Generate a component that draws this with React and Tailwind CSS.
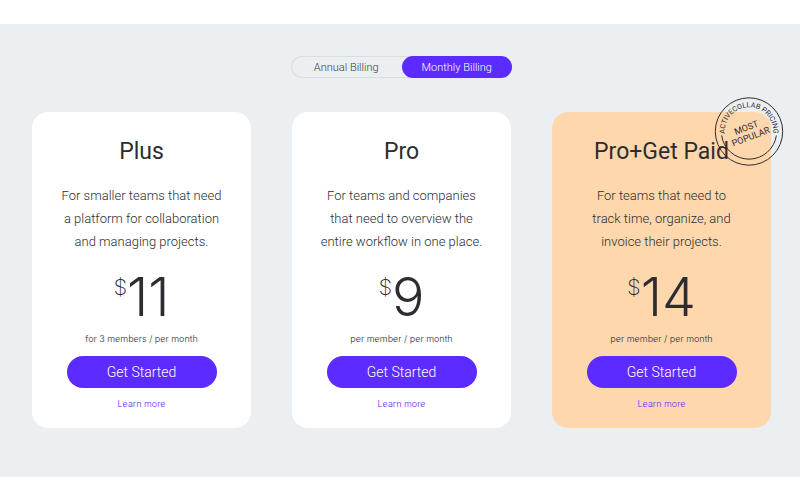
import { useState } from "react";

const plans = [
  {
    name: "Plus",
    lines: ["For smaller teams that need", "a platform for collaboration", "and managing projects."],
    price: "11",
    unit: "for 3 members / per month",
  },
  {
    name: "Pro",
    lines: ["For teams and companies", "that need to overview the", "entire workflow in one place."],
    price: "9",
    unit: "per member / per month",
  },
  {
    name: "Pro+Get Paid",
    lines: ["For teams that need to", "track time, organize, and", "invoice their projects."],
    price: "14",
    unit: "per member / per month",
    popular: true,
  },
];

function PopularBadge() {
  return (
    <svg
      className="absolute -top-[15px] -right-[13px] size-[70px] text-[#2b2d30]"
      viewBox="0 0 70 70"
      fill="none"
      stroke="currentColor"
      role="img"
      aria-label="Most popular"
    >
      <circle cx="35" cy="34.5" r="33.7" strokeWidth="1" />
      <path d="M7.6 38.5 A27.7 27.7 0 0 0 62.4 38.5" strokeWidth="1" />
      <path id="badge-arc" d="M11.3 40 A24.3 24.3 0 1 1 58.7 40" stroke="none" />
      <g fill="currentColor" stroke="none" fontFamily="Roboto, sans-serif">
        <text fontSize="7.2" textAnchor="middle">
          <textPath href="#badge-arc" startOffset="50%">ACTIVECOLLAB PRICING</textPath>
        </text>
        <g transform="rotate(-21 35 35)" fontSize="9" textAnchor="middle">
          <text x="34" y="33">MOST</text>
          <text x="35" y="43">POPULAR</text>
        </g>
      </g>
    </svg>
  );
}

function BillingToggle() {
  const [billing, setBilling] = useState("Monthly");
  return (
    <fieldset className="mx-auto grid h-[22px] w-[221px] grid-cols-2 rounded-full text-[11px] leading-[21px] font-light ring-1 ring-[#d9dde0] ring-inset">
      {["Annual", "Monthly"].map((option) => (
        <label
          key={option}
          className="cursor-pointer rounded-full pt-px text-center text-[#3c3f42] has-checked:bg-[#5c2bff] has-checked:text-white"
        >
          <input
            type="radio"
            name="billing"
            className="sr-only"
            checked={billing === option}
            onChange={() => setBilling(option)}
          />
          {option} Billing
        </label>
      ))}
    </fieldset>
  );
}

function PlanCard({ plan }) {
  return (
    <article
      className={`relative flex flex-col items-center rounded-2xl pt-6 pb-4 text-center text-[#2b2d30] ${
        plan.popular ? "bg-[#ffd7ad]" : "bg-white"
      }`}
    >
      <h2 className="text-[23px] leading-8 whitespace-nowrap">{plan.name}</h2>
      <p className="mt-4 text-[13px] leading-[23px] font-light whitespace-nowrap">
        {plan.lines.map((line) => (
          <span key={line} className="block">
            {line}
          </span>
        ))}
      </p>
      <p className="mt-5 flex items-start font-[Inter,sans-serif]">
        <span className="text-[22px] leading-[28px] font-extralight">$</span>
        <span className="text-[54px] leading-[48px] font-light">{plan.price}</span>
      </p>
      <p className="mt-[10px] font-[Inter,sans-serif] text-[9px] leading-4 font-light">{plan.unit}</p>
      <button
        type="button"
        className="mt-[9px] h-8 w-[150px] cursor-pointer rounded-full bg-[#5c2bff] text-[14px] font-light text-white"
      >
        Get Started
      </button>
      <a href="#learn-more" className="mt-2 font-[Inter,sans-serif] text-[9px] leading-4 font-light text-[#5c2bff]">
        Learn more
      </a>
      {plan.popular && <PopularBadge />}
    </article>
  );
}

export default function App() {
  return (
    <main className="bg-white py-6 font-[Roboto,sans-serif]">
      <section className="bg-[#ebeff2] pt-8 pr-[29px] pb-[49px] pl-8">
        <BillingToggle />
        <div className="mt-[34px] grid grid-cols-3 gap-[41px]">
          {plans.map((plan) => (
            <PlanCard key={plan.name} plan={plan} />
          ))}
        </div>
      </section>
    </main>
  );
}
